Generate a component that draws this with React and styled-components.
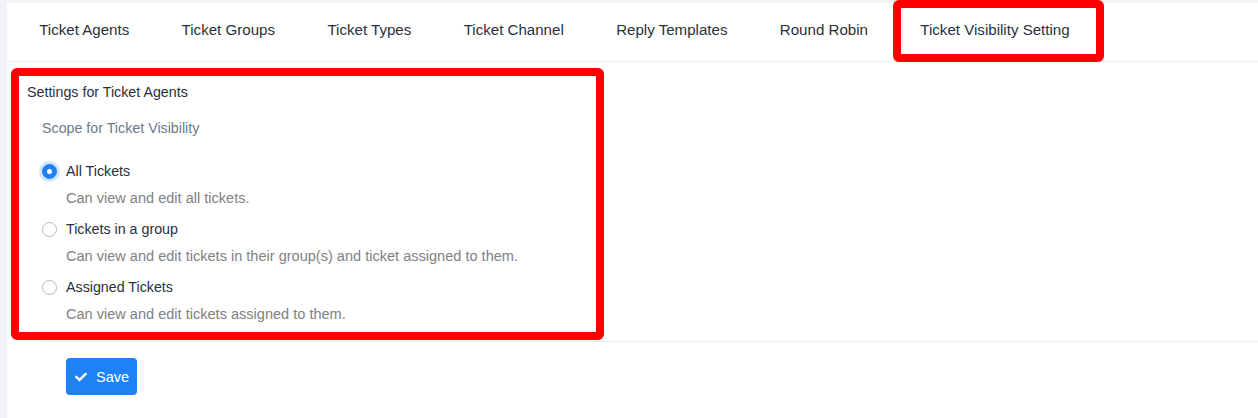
import React from "react";
import styled, { createGlobalStyle } from "styled-components";
import { FaCheck } from "react-icons/fa";

const Global = createGlobalStyle`
  html, body { margin: 0; padding: 0; background: #f1f2f6; }
  body { font-family: "Liberation Sans", Arial, sans-serif; }
  * { box-sizing: border-box; }
`;

const Card = styled.div`
  margin: 3px 0 0 7px;
  background: #fff;
  min-height: 415px;
`;

const TabBar = styled.div`
  display: flex;
  height: 59px;
  border-bottom: 1px solid #e8eef3;
  padding-left: 6px;
`;

const Tab = styled.div`
  position: relative;
  padding: 0 26.2px;
  line-height: 54px;
  font-size: 15.1px;
  color: #28313c;
  white-space: nowrap;
`;

const Highlight = styled.span`
  position: absolute;
  left: -1px;
  right: -8px;
  top: -3px;
  bottom: -1px;
  border: 8px solid #ff0000;
  border-radius: 6px;
  pointer-events: none;
`;

const FormBox = styled.div`
  margin: 6px 0 0 4px;
  width: 593px;
  border: 8px solid #ff0000;
  border-radius: 6px;
  padding: 6px 0 8px 8px;
`;

const Title = styled.div`
  font-size: 14.25px;
  line-height: 20px;
  color: #28313c;
`;

const Group = styled.div`
  padding-left: 15px;
`;

const Scope = styled.div`
  margin-top: 16px;
  font-size: 14.25px;
  line-height: 20px;
  color: #6c7a8b;
`;

const Options = styled.div`
  margin-top: 23px;
  display: flex;
  flex-direction: column;
  gap: 11px;
`;

const Option = styled.div`
  display: flex;
  flex-direction: column;
  gap: 7px;
`;

const OptionRow = styled.label`
  display: flex;
  align-items: center;
  gap: 9px;
  font-size: 14.25px;
  line-height: 20px;
  color: #28313c;
`;

const Radio = styled.span`
  width: 15px;
  height: 15px;
  border-radius: 50%;
  flex: none;
  display: flex;
  align-items: center;
  justify-content: center;
  background: ${(p) => (p.$checked ? "#1d82f5" : "#fff")};
  border: 1px solid ${(p) => (p.$checked ? "#1d82f5" : "#b3b8be")};
  box-shadow: ${(p) => (p.$checked ? "0 0 0 3px rgba(29,130,245,0.2)" : "none")};
  &::after {
    content: "";
    display: ${(p) => (p.$checked ? "block" : "none")};
    width: 5px;
    height: 5px;
    border-radius: 50%;
    background: #fff;
  }
`;

const Desc = styled.div`
  padding-left: 24px;
  font-size: 14.55px;
  line-height: 20px;
  color: #818181;
`;

const Footer = styled.div`
  margin: 1px 0 0 35px;
  border-top: 1px solid #e8eef3;
  padding: 16px 0 0 24px;
`;

const SaveButton = styled.button`
  display: inline-flex;
  align-items: center;
  gap: 9px;
  height: 37px;
  width: 71px;
  padding: 0 0 0 9px;
  border: none;
  border-radius: 4px;
  background: #1d82f5;
  color: #fff;
  font-family: "Liberation Sans", Arial, sans-serif;
  font-size: 14.5px;
  cursor: pointer;
`;

const tabs = [
  "Ticket Agents",
  "Ticket Groups",
  "Ticket Types",
  "Ticket Channel",
  "Reply Templates",
  "Round Robin",
  "Ticket Visibility Setting",
];

const options = [
  { label: "All Tickets", desc: "Can view and edit all tickets.", checked: true },
  {
    label: "Tickets in a group",
    desc: "Can view and edit tickets in their group(s) and ticket assigned to them.",
  },
  { label: "Assigned Tickets", desc: "Can view and edit tickets assigned to them." },
];

export default function App() {
  return (
    <>
      <Global />
      <Card>
        <TabBar>
          {tabs.map((t, i) => (
            <Tab key={t}>
              {t}
              {i === tabs.length - 1 && <Highlight />}
            </Tab>
          ))}
        </TabBar>
        <FormBox>
          <Title>Settings for Ticket Agents</Title>
          <Group>
            <Scope>Scope for Ticket Visibility</Scope>
            <Options>
              {options.map((o) => (
                <Option key={o.label}>
                  <OptionRow>
                    <Radio $checked={o.checked} />
                    {o.label}
                  </OptionRow>
                  <Desc>{o.desc}</Desc>
                </Option>
              ))}
            </Options>
          </Group>
        </FormBox>
        <Footer>
          <SaveButton>
            <FaCheck size={12} />
            Save
          </SaveButton>
        </Footer>
      </Card>
    </>
  );
}
